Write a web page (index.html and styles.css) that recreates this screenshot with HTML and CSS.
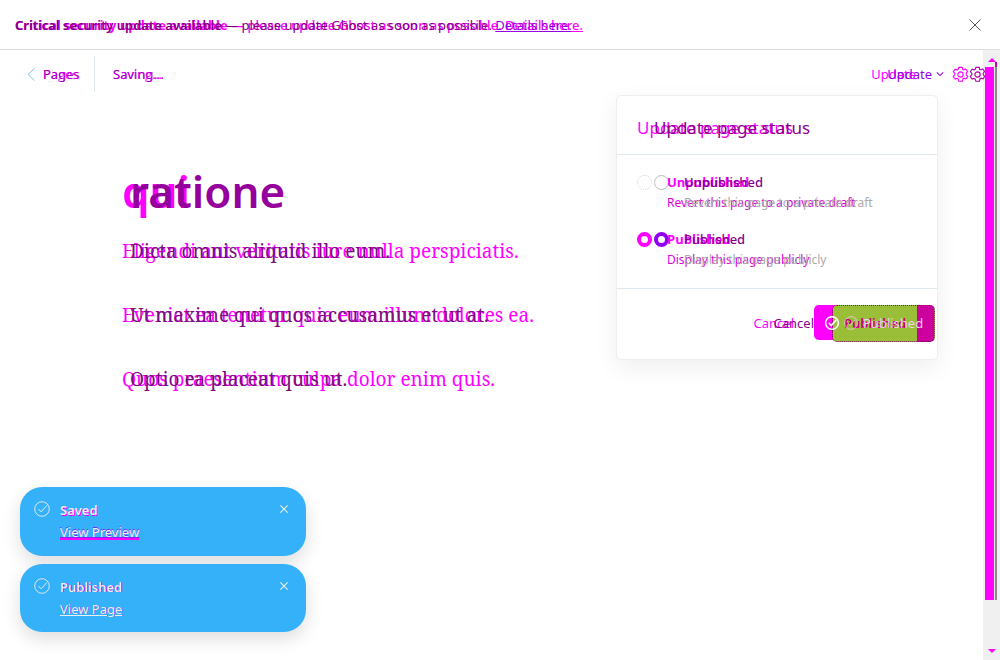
FILE: index.html
```html
<!DOCTYPE html>
<html lang="en">
<head>
<meta charset="utf-8">
<title>Page editor comparison</title>
<link rel="stylesheet" href="styles.css">
</head>
<body>
<svg class="symbols" aria-hidden="true">
  <symbol id="gear" viewBox="0 0 18 18"><path d="M7.2 1.5h3.6l.6 2.2 1.1.5 2-1.1 2 2.7-1.4 1.7v1.8l1.6 1.6-1.8 2.7-2.2-.7-1.1.8-.5 2.5H7.3l-.7-2.4-1.2-.7-2.1.8-2-2.8 1.7-1.7V7.8L1.4 6.1l1.9-2.8 2.2.8 1.1-.6z"/><circle cx="9" cy="9" r="2.8"/></symbol>
  <symbol id="check" viewBox="0 0 18 18"><circle cx="9" cy="9" r="8.2"/><path d="m5 9 3 3.2L14.5 5"/></symbol>
  <symbol id="cross" viewBox="0 0 12 12"><path d="m.5.5 11 11m0-11-11 11"/></symbol>
</svg>
<div class="app">
  <header class="banner">
    <div class="pair">
      <p class="before"><span class="strong">Critical security update available</span> — please update Ghost as soon as possible. <a href="#">Details here.</a></p>
      <p class="after"><span class="strong">Critical security update available</span> — please update Ghost as soon as possible. <a href="#">Details here.</a></p>
    </div>
    <button class="close" aria-label="Close banner"><svg><use href="#cross"/></svg></button>
  </header>
  <div class="workspace">
    <div class="editor">
      <nav class="toolbar">
        <a class="back" href="#"><svg viewBox="0 0 8 13"><path d="M7.5.5l-6.5 6 6.5 6"/></svg><span class="pair small"><span class="before">Pages</span><span class="after">Pages</span></span></a>
        <span class="pair small status"><span class="before">Saving...</span><span class="after">Saving...</span></span>
        <button class="update pair"><span class="before">Update</span><span class="after">Update<svg viewBox="0 0 10 6"><path d="m1 1 4 4 4-4"/></svg></span></button>
        <button class="settings pair" aria-label="Settings"><svg class="before"><use href="#gear"/></svg><svg class="after"><use href="#gear"/></svg></button>
      </nav>
      <article>
        <h1 class="pair"><span class="before">qui</span><span class="after">ratione</span></h1>
        <p class="pair"><span class="before">Eligendi aut veritatis iure nulla perspiciatis.</span><span class="after">Dicta omnis aliquid illo eum.</span></p>
        <p class="pair"><span class="before">Eveniet ea tenetur quia eum illum dolores ea.</span><span class="after">Ut maxime qui quos accusamus et ut at.</span></p>
        <p class="pair"><span class="before">Quos praesentium culpa dolor enim quis.</span><span class="after">Optio ea placeat quis ut.</span></p>
      </article>
      <section class="menu">
        <h2 class="pair"><span class="before">Update page status</span><span class="after">Update page status</span></h2>
        <div class="options">
          <div class="option">
            <div class="radios"><input type="radio" name="old" aria-label="Previous unpublished"><input id="unpublished" type="radio" name="new"></div>
            <label class="pair" for="unpublished"><span class="before title">Unpublished</span><span class="after title">Unpublished</span></label>
            <div class="pair detail"><span class="before">Revert this page to a private draft</span><span class="after">Revert this page to a private draft</span></div>
          </div>
          <div class="option">
            <div class="radios"><input type="radio" name="old" aria-label="Previous published" checked><input id="published" type="radio" name="new" checked></div>
            <label class="pair" for="published"><span class="before title">Published</span><span class="after title">Published</span></label>
            <div class="pair detail"><span class="before">Display this page publicly</span><span class="after">Display this page publicly</span></div>
          </div>
        </div>
        <footer>
          <button class="cancel pair"><span class="before">Cancel</span><span class="after">Cancel</span></button>
          <div class="pair actions">
            <button class="before" aria-label="Previous status"></button>
            <button class="after" aria-label="Published"></button>
            <span class="pair caption"><span class="before"><svg><use href="#check"/></svg>Published</span><span class="after"><svg><use href="#check"/></svg>Published</span></span>
          </div>
        </footer>
      </section>
      <aside class="toasts">
        <div class="toast"><svg class="tick"><use href="#check"/></svg><div class="message saved"><strong>Saved</strong><a href="#">View Preview</a></div><button class="close" aria-label="Dismiss saved message"><svg><use href="#cross"/></svg></button></div>
        <div class="toast"><svg class="tick"><use href="#check"/></svg><div class="message"><strong>Published</strong><a href="#">View Page</a></div><button class="close" aria-label="Dismiss published message"><svg><use href="#cross"/></svg></button></div>
      </aside>
    </div>
    <div class="scrollbar" aria-hidden="true">
      <svg viewBox="0 0 8 4"><path d="m0 4 4-4 4 4z"/></svg>
      <div class="track"><i class="thumb"></i><i class="edge"></i></div>
      <svg viewBox="0 0 8 4"><path d="M0 0h8L4 4z"/></svg>
    </div>
  </div>
</div>
</body>
</html>
```
FILE: styles.css
```css
* { box-sizing: border-box; }
body { margin: 0; background: #fff; color: #88008d; font: 13px/20px "Noto Sans", sans-serif; }
h1, h2, p { margin: 0; font-weight: 400; }
a { color: inherit; }
button { padding: 0; border: 0; background: none; color: inherit; font: inherit; }
svg { display: block; fill: none; stroke: currentColor; overflow: visible; }
.symbols { position: absolute; width: 0; height: 0; }
.pair { display: grid; justify-items: start; align-items: start; }
.pair > * { grid-area: 1 / 1; white-space: nowrap; }
.before { color: #f0f; }
.app { min-height: 100vh; display: flex; flex-direction: column; }
.banner { height: 50px; border-bottom: 1px solid #ddd; display: flex; align-items: center; justify-content: space-between; padding: 0 19px 0 15px; }
.banner .strong { font-weight: 600; }
.banner .before { font-weight: 500; }
.banner .before .strong { font-weight: 700; }
.banner .after { color: #800084; }
.banner .after a { color: #9400e0; }
.banner .close { color: #555; }
.banner .close svg { width: 12px; height: 12px; }
.workspace { flex: 1; display: flex; }
.editor { flex: 1; position: relative; }
.toolbar { display: flex; align-items: center; padding: 6px 0 0 27px; height: 42px; }
.back { display: flex; align-items: center; gap: 8px; height: 36px; width: 68px; border-right: 1px solid #dce8f0; text-decoration: none; }
.back svg { width: 8px; height: 13px; color: #78c5e8; }
.small .before { font-family: "Open Sans", sans-serif; }
.small .after { color: #b000d0; }
.status { margin-left: 18px; }
.update { margin-left: auto; }
.update .after { margin-left: 16px; color: #9000e8; display: flex; align-items: center; gap: 4px; }
.update svg { width: 8px; height: 6px; stroke-width: 1.3; }
.settings { margin: 0 -3px 0 8px; }
.settings svg { width: 17px; height: 17px; stroke-width: 1.2; }
.settings .after { margin-left: 17px; color: #b400b0; }
article { padding: 67px 122px; font: 19px/28px "Noto Serif", "Liberation Serif", serif; }
article h1 { font: 600 44px/64px "Noto Sans", sans-serif; margin-bottom: 14px; }
article .after { padding-left: 8px; color: #78107c; }
article h1 .after { color: #95009d; }
article p { margin-bottom: 36px; }
.menu { position: absolute; top: 45px; right: 45px; width: 322px; border: 1px solid #eee; border-radius: 5px; background: #fff; box-shadow: 0 8px 24px #0001; }
.menu h2 { padding: 20px; font-size: 17px; line-height: 24px; height: 59px; border-bottom: 1px solid #dfe9f0; }
.menu h2 .after { margin-left: 17px; }
.options { height: 134px; padding: 17px 20px; border-bottom: 1px solid #dfe9f0; }
.option { display: grid; grid-template-columns: 30px 1fr; grid-template-rows: 20px 20px; margin-bottom: 17px; }
.option label, .detail { grid-column: 2; }
.option .after { margin-left: 17px; }
.option .before.title { font-family: "Open Sans", sans-serif; font-weight: 700; }
.option .after.title { font-weight: 500; }
.detail { font-size: 12px; line-height: 22px; }
.detail .before { color: #e000e0; }
.detail .after { color: #aaa; }
.radios { grid-row: 1; display: flex; align-items: center; gap: 2px; width: 32px; }
.radios input { appearance: none; width: 15px; height: 15px; flex: none; margin: 0; border: 1px dotted #ccd6df; border-radius: 50%; }
.radios input + input { border: 1px solid #bbb; }
.radios input:checked { border: 4px solid #f0f; }
.radios input + input:checked { border-color: #9000f0; }
.menu footer { height: 70px; padding: 0 2px 2px 20px; display: flex; align-items: center; justify-content: flex-end; }
.cancel .after { margin-left: 20px; }
.actions button { width: 103px; height: 35px; border-radius: 5px; background: #f0f; }
.actions button.after { margin-left: 18px; height: 37px; border: 1px dotted #850065; background: linear-gradient(90deg, #9bbe38 84px, #cb009d 84px); }
.caption { padding: 8px 0 0 11px; pointer-events: none; }
.caption span { display: flex; align-items: center; gap: 5px; }
.caption svg { width: 14px; height: 14px; }
.caption .before { color: #c8007f; font-weight: 600; }
.caption .before svg { color: #fff; stroke-width: 2; }
.caption .after { margin-left: 19px; color: #eed5e8; }
.toasts { position: absolute; left: 20px; bottom: 28px; width: 286px; display: grid; gap: 8px; }
.toast { height: 69px; padding: 13px 18px 0 14px; border-radius: 22px; display: flex; align-items: flex-start; background: #35b1f9; box-shadow: 0 7px 18px #0002; color: #eee; }
.toast + .toast { height: 68px; }
.tick { width: 16px; height: 16px; margin: 1px 10px 0 0; }
.message { flex: 1; display: grid; line-height: 22px; margin-top: -1px; }
.message strong { font-weight: 600; text-shadow: 1px 0 #9500ff; }
.message a { justify-self: start; text-shadow: 1px 0 #9500ff80; }
.saved strong { text-shadow: 1px 1px #e0f; }
.saved a { text-shadow: 0 -1px #90fc; text-decoration: underline 2px #f0f; }
.toast .close svg { width: 8px; height: 8px; margin-top: 5px; stroke-width: 1.6; }
.scrollbar { width: 17px; background: #f0f0f0; color: #f0f; display: flex; flex-direction: column; align-items: center; padding: 8px 0 7px; }
.scrollbar svg { width: 8px; height: 4px; fill: currentColor; stroke: none; }
.track { flex: 1; align-self: stretch; display: flex; align-items: flex-start; gap: 1px; padding-left: 2px; margin-bottom: 49px; }
.thumb { width: 9px; align-self: stretch; margin-top: 5px; background: #f0f; }
.edge { width: 2px; align-self: stretch; background: linear-gradient(#c800c0 5px, #888 5px); }
```
